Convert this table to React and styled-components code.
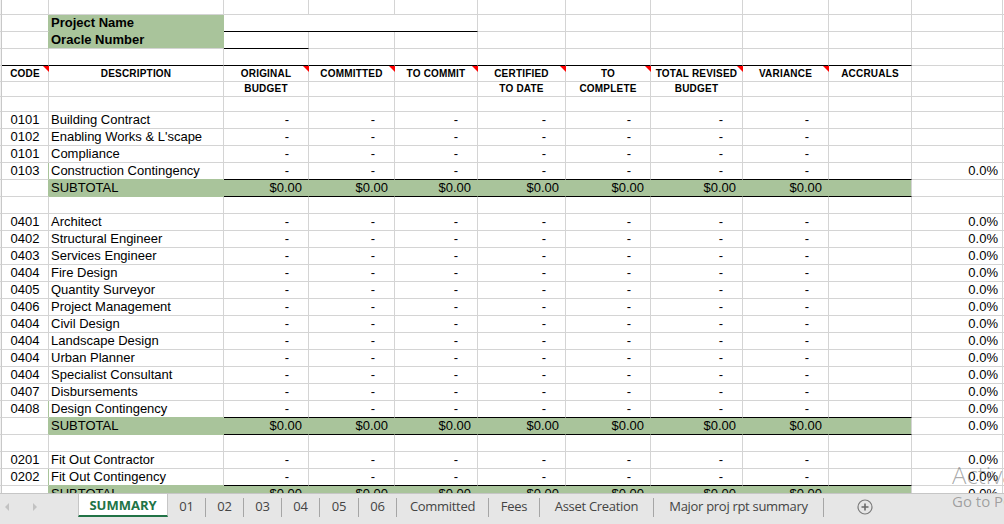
import React from 'react';
import styled, { createGlobalStyle } from 'styled-components';

const GRID = '#d4d4d4';
const GREEN = '#a9c49b';
const BLACK = '#000';

// column widths include the right gridline pixel
const COLS = [2, 47, 175, 85, 86, 83, 88, 85, 92, 86, 83, 91, 80];
const NUM_COLS = [3, 4, 5, 6, 7, 8, 9];

const GlobalStyle = createGlobalStyle`
  html, body {
    margin: 0;
    padding: 0;
    background: #fff;
    overflow: hidden;
  }
  #root {
    width: 1004px;
    height: 524px;
  }
`;

const Page = styled.div`
  position: relative;
  width: 1004px;
  height: 524px;
  display: flex;
  flex-direction: column;
  overflow: hidden;
  background: #fff;
`;

const Sheet = styled.div`
  flex: none;
  height: 493px;
  overflow: hidden;
  display: flex;
  flex-direction: column;
`;

const Row = styled.div`
  flex: none;
  display: flex;
  height: ${(p) => p.$h}px;
`;

const Cell = styled.div`
  position: relative;
  flex: none;
  box-sizing: border-box;
  width: ${(p) => p.$w}px;
  height: 100%;
  border-right: 1px solid ${(p) => p.$rc || GRID};
  border-bottom: 1px solid ${(p) => p.$bc || GRID};
  background: ${(p) => p.$fill || '#fff'};
  padding: 0 ${(p) => p.$pr ?? 2}px 0 ${(p) => p.$pl ?? 2}px;
  text-align: ${(p) => p.$align || 'left'};
  font-family: 'Liberation Sans', Arial, sans-serif;
  font-size: 13px;
  line-height: 16px;
  color: #000;
  white-space: nowrap;
`;

const Strip = styled(Cell)`
  padding: 0;
  background: #f2f2f2;
  border-right-color: #c8c8c8;
`;

const HeadCell = styled(Cell)`
  text-align: center;
  font-weight: 700;
  font-size: 10px;
  letter-spacing: 0.2px;
  line-height: ${(p) => p.$lh}px;
`;

const LabelCell = styled(Cell)`
  font-weight: 700;
`;

const Marker = styled.span`
  position: absolute;
  top: 0;
  right: -1px;
  width: 0;
  height: 0;
  border-top: 6px solid #ff0000;
  border-left: 6px solid transparent;
`;

const Overlay = styled.div`
  position: absolute;
  left: 952px;
  top: 459px;
  font-family: 'Open Sans', 'Noto Sans', sans-serif;
  color: rgba(80, 80, 80, 0.48);
  white-space: nowrap;
  pointer-events: none;
`;

const OverlayTitle = styled.div`
  font-size: 24px;
  line-height: 32px;
  font-weight: 300;
`;

const OverlaySub = styled.div`
  font-size: 15px;
  line-height: 20px;
`;

const TabBar = styled.div`
  flex: none;
  box-sizing: border-box;
  height: 31px;
  border-top: 1px solid #c6c6c6;
  background: #e6e6e6;
  display: flex;
  align-items: flex-start;
`;

const Nav = styled.div`
  flex: none;
  width: 78px;
  height: 23px;
  display: flex;
  align-items: center;
  gap: 24px;
  padding-left: 5px;
  box-sizing: border-box;
`;

const Arrow = styled.span`
  width: 0;
  height: 0;
  border-top: 4px solid transparent;
  border-bottom: 4px solid transparent;
  ${(p) =>
    p.$dir === 'left'
      ? 'border-right: 4px solid #c2c2c2;'
      : 'border-left: 4px solid #c2c2c2;'}
  margin-top: 3px;
`;

const Tabs = styled.div`
  display: flex;
  align-items: flex-end;
  height: 23px;
`;

const ActiveTab = styled.div`
  flex: none;
  box-sizing: border-box;
  width: 90px;
  height: 23px;
  background: #fff;
  border-left: 1px solid #c6c6c6;
  border-right: 1px solid #c6c6c6;
  border-bottom: 2px solid #217346;
  text-align: center;
  font-family: 'Open Sans', 'Noto Sans', sans-serif;
  font-weight: 700;
  font-size: 13px;
  line-height: 22px;
  color: #217346;
`;

const Tab = styled.div`
  flex: none;
  box-sizing: border-box;
  width: ${(p) => p.$w}px;
  height: 19px;
  border-right: 1px solid #a6a6a6;
  text-align: center;
  font-family: 'Open Sans', 'Noto Sans', sans-serif;
  font-size: 13px;
  letter-spacing: -0.3px;
  line-height: 17px;
  color: #444;
  white-space: nowrap;
`;

const AddButton = styled.div`
  flex: none;
  margin-left: 33px;
  margin-top: 5px;
  width: 16px;
  height: 16px;
  display: flex;
`;

const blank = (i, extra = {}) => <Cell key={i} $w={COLS[i]} {...extra} />;

function TopRow() {
  return (
    <Row $h={15}>
      <Strip $w={COLS[0]} />
      {COLS.slice(1).map((_, k) => blank(k + 1))}
    </Row>
  );
}

function ProjectRow() {
  return (
    <Row $h={17}>
      <Strip $w={COLS[0]} />
      <Cell $w={COLS[1]} $rc={GREEN} />
      <LabelCell $w={COLS[2]} $fill={GREEN} $rc={GREEN} $bc={GREEN}>
        Project Name
      </LabelCell>
      <Cell $w={COLS[3] + COLS[4] + COLS[5]} $bc={BLACK} />
      {[6, 7, 8, 9, 10, 11, 12].map((i) => blank(i))}
    </Row>
  );
}

function OracleRow() {
  return (
    <Row $h={17}>
      <Strip $w={COLS[0]} />
      <Cell $w={COLS[1]} $rc={GREEN} />
      <LabelCell $w={COLS[2]} $fill={GREEN} $rc={GREEN}>
        Oracle Number
      </LabelCell>
      <Cell $w={COLS[3]} $bc={BLACK} />
      {[4, 5, 6, 7, 8, 9, 10, 11, 12].map((i) => blank(i))}
    </Row>
  );
}

function RuleRow() {
  return (
    <Row $h={17}>
      <Strip $w={COLS[0]} />
      {COLS.slice(1).map((_, k) => blank(k + 1, k + 1 <= 10 ? { $bc: BLACK } : {}))}
    </Row>
  );
}

const HEAD_1 = ['CODE', 'DESCRIPTION', 'ORIGINAL', 'COMMITTED', 'TO COMMIT', 'CERTIFIED', 'TO', 'TOTAL REVISED', 'VARIANCE', 'ACCRUALS', '', ''];
const HEAD_2 = ['', '', 'BUDGET', '', '', 'TO DATE', 'COMPLETE', 'BUDGET', '', '', '', ''];
const MARKED = [1, 3, 4, 5, 6, 7, 8, 9];

function HeaderRow({ labels, h, marks }) {
  return (
    <Row $h={h}>
      <Strip $w={COLS[0]} />
      {labels.map((label, k) => (
        <HeadCell key={k} $w={COLS[k + 1]} $lh={h - 1}>
          {label}
          {marks && MARKED.includes(k + 1) && <Marker />}
        </HeadCell>
      ))}
    </Row>
  );
}

function BlankRow({ h = 17 }) {
  return (
    <Row $h={h}>
      <Strip $w={COLS[0]} />
      {COLS.slice(1).map((_, k) => blank(k + 1))}
    </Row>
  );
}

function ItemRow({ code, desc, pct, last }) {
  return (
    <Row $h={17}>
      <Strip $w={COLS[0]} />
      <Cell $w={COLS[1]} $align="center" $rc={last ? GREEN : undefined}>
        {code}
      </Cell>
      <Cell $w={COLS[2]} $bc={last ? GREEN : undefined}>
        {desc}
      </Cell>
      {NUM_COLS.map((i) => (
        <Cell key={i} $w={COLS[i]} $align="right" $pr={19} $bc={last ? BLACK : undefined}>
          -
        </Cell>
      ))}
      <Cell $w={COLS[10]} $bc={last ? BLACK : undefined} />
      <Cell $w={COLS[11]} $align="right" $pr={4}>
        {pct ? '0.0%' : ''}
      </Cell>
      {blank(12)}
    </Row>
  );
}

function SubtotalRow({ pct }) {
  return (
    <Row $h={17}>
      <Strip $w={COLS[0]} />
      <Cell $w={COLS[1]} $rc={GREEN} />
      <Cell $w={COLS[2]} $fill={GREEN} $rc={GREEN} $bc={GREEN}>
        SUBTOTAL
      </Cell>
      {NUM_COLS.map((i) => (
        <Cell key={i} $w={COLS[i]} $align="right" $pr={6} $fill={GREEN} $rc={GREEN} $bc={BLACK}>
          $0.00
        </Cell>
      ))}
      <Cell $w={COLS[10]} $fill={GREEN} $bc={BLACK} />
      <Cell $w={COLS[11]} $align="right" $pr={4}>
        {pct ? '0.0%' : ''}
      </Cell>
      {blank(12)}
    </Row>
  );
}

const GROUPS = [
  {
    items: [
      ['0101', 'Building Contract', false],
      ['0102', 'Enabling Works & L\'scape', false],
      ['0101', 'Compliance', false],
      ['0103', 'Construction Contingency', true],
    ],
    subtotalPct: false,
  },
  {
    items: [
      ['0401', 'Architect', true],
      ['0402', 'Structural Engineer', true],
      ['0403', 'Services Engineer', true],
      ['0404', 'Fire Design', true],
      ['0405', 'Quantity Surveyor', true],
      ['0406', 'Project Management', true],
      ['0404', 'Civil Design', true],
      ['0404', 'Landscape Design', true],
      ['0404', 'Urban Planner', true],
      ['0404', 'Specialist Consultant', true],
      ['0407', 'Disbursements', true],
      ['0408', 'Design Contingency', true],
    ],
    subtotalPct: true,
  },
  {
    items: [
      ['0201', 'Fit Out Contractor', true],
      ['0202', 'Fit Out Contingency', true],
    ],
    subtotalPct: true,
  },
];

const SHEET_TABS = [
  ['01', 38],
  ['02', 38],
  ['03', 38],
  ['04', 38],
  ['05', 39],
  ['06', 38],
  ['Committed', 92],
  ['Fees', 51],
  ['Asset Creation', 114],
  ['Major proj rpt summary', 170],
];

function PlusIcon() {
  return (
    <svg width="16" height="16" viewBox="0 0 16 16">
      <circle cx="8" cy="8" r="7" fill="none" stroke="#7a7a7a" strokeWidth="1.2" />
      <path d="M8 4.5v7M4.5 8h7" stroke="#6a6a6a" strokeWidth="1.6" />
    </svg>
  );
}

export default function App() {
  return (
    <Page>
      <GlobalStyle />
      <Sheet>
        <TopRow />
        <ProjectRow />
        <OracleRow />
        <RuleRow />
        <HeaderRow labels={HEAD_1} h={16} marks />
        <HeaderRow labels={HEAD_2} h={15} />
        <BlankRow h={15} />
        {GROUPS.map((g, gi) => (
          <React.Fragment key={gi}>
            {g.items.map(([code, desc, pct], i) => (
              <ItemRow key={i} code={code} desc={desc} pct={pct} last={i === g.items.length - 1} />
            ))}
            <SubtotalRow pct={g.subtotalPct} />
            <BlankRow />
          </React.Fragment>
        ))}
        <BlankRow />
        <BlankRow />
      </Sheet>
      <TabBar>
        <Nav>
          <Arrow $dir="left" />
          <Arrow $dir="right" />
        </Nav>
        <Tabs>
          <ActiveTab>SUMMARY</ActiveTab>
          {SHEET_TABS.map(([name, w]) => (
            <Tab key={name} $w={w}>
              {name}
            </Tab>
          ))}
        </Tabs>
        <AddButton>
          <PlusIcon />
        </AddButton>
      </TabBar>
      <Overlay>
        <OverlayTitle>Activate Windows</OverlayTitle>
        <OverlaySub>Go to PC settings to activate Windows.</OverlaySub>
      </Overlay>
    </Page>
  );
}
